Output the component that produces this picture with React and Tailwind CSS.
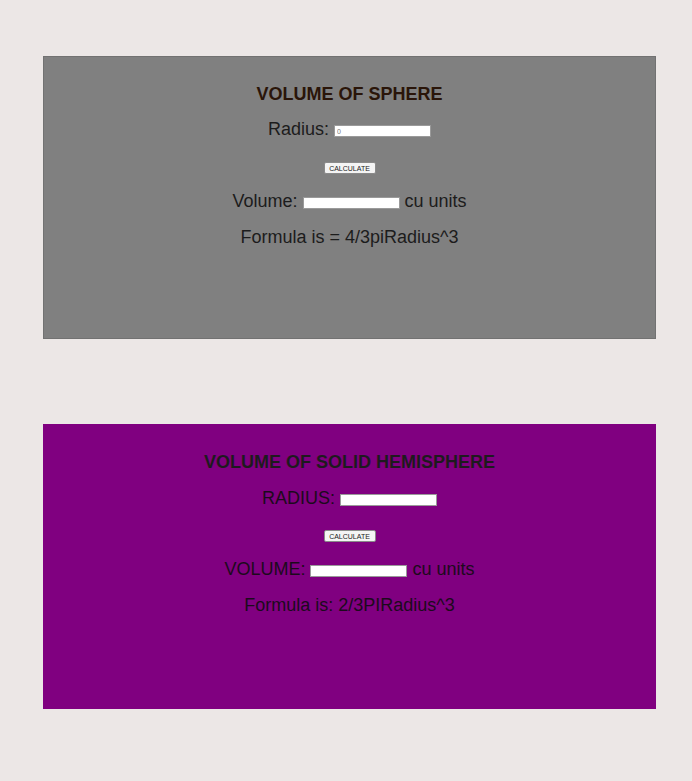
import React from 'react';

const Calc = ({ bg, title, radiusLabel, volumeLabel, formula, headColor, textColor, value, border, gaps }) => (
  <div className={`${bg} ${border} flex flex-col items-center`}>
    <h2 className={`${gaps[0]} h-6 leading-6 text-[18px] font-bold ${headColor}`}>{title}</h2>
    <div className={`${gaps[1]} h-6 flex items-center text-[18px] ${textColor}`}>
      <span>{radiusLabel}</span>
      <input
        defaultValue={value}
        className="ml-[5px] mt-[4px] w-[97px] h-[12px] bg-white border border-[#9a9a9a] text-[7px] text-[#777] px-[2px] leading-none outline-none"
      />
    </div>
    <button className={`${gaps[2]} h-[12px] w-[52px] bg-[#f4f4f4] border border-[#8a8a8a] rounded-[2px] text-[7px] font-medium text-[#222] leading-none`}>
      CALCULATE
    </button>
    <div className={`mt-[15px] h-6 flex items-center text-[18px] ${textColor}`}>
      <span>{volumeLabel}</span>
      <input className="mx-[5px] mt-[4px] w-[97px] h-[12px] bg-white border border-[#9a9a9a] outline-none" readOnly />
      <span>cu units</span>
    </div>
    <div className={`mt-[12px] h-6 leading-6 text-[18px] ${textColor}`}>{formula}</div>
  </div>
);

export default function App() {
  return (
    <div className="min-h-[781px] w-[692px] bg-[#ece7e6] pl-[43px] pr-[36px] pt-[56px] pb-[72px] font-['Liberation_Sans',Arial,sans-serif]">
      <Calc
        bg="bg-[#808080] h-[283px]"
        border="border border-[#727272]"
        title="VOLUME OF SPHERE"
        radiusLabel="Radius:"
        volumeLabel="Volume:"
        formula="Formula is = 4/3piRadius^3"
        headColor="text-[#2a1509]"
        textColor="text-[#1c1c1c]"
        value="0"
        gaps={['mt-[25px]', 'mt-[11px]', 'mt-[21px]']}
      />
      <div className="h-[85px]" />
      <Calc
        bg="bg-[#800080] h-[285px]"
        border=""
        title="VOLUME OF SOLID HEMISPHERE"
        radiusLabel="RADIUS:"
        volumeLabel="VOLUME:"
        formula="Formula is: 2/3PIRadius^3"
        headColor="text-[#1e1a1e]"
        textColor="text-[#1c0a1c]"
        value=""
        gaps={['mt-[26px]', 'mt-[12px]', 'mt-[20px]']}
      />
    </div>
  );
}
